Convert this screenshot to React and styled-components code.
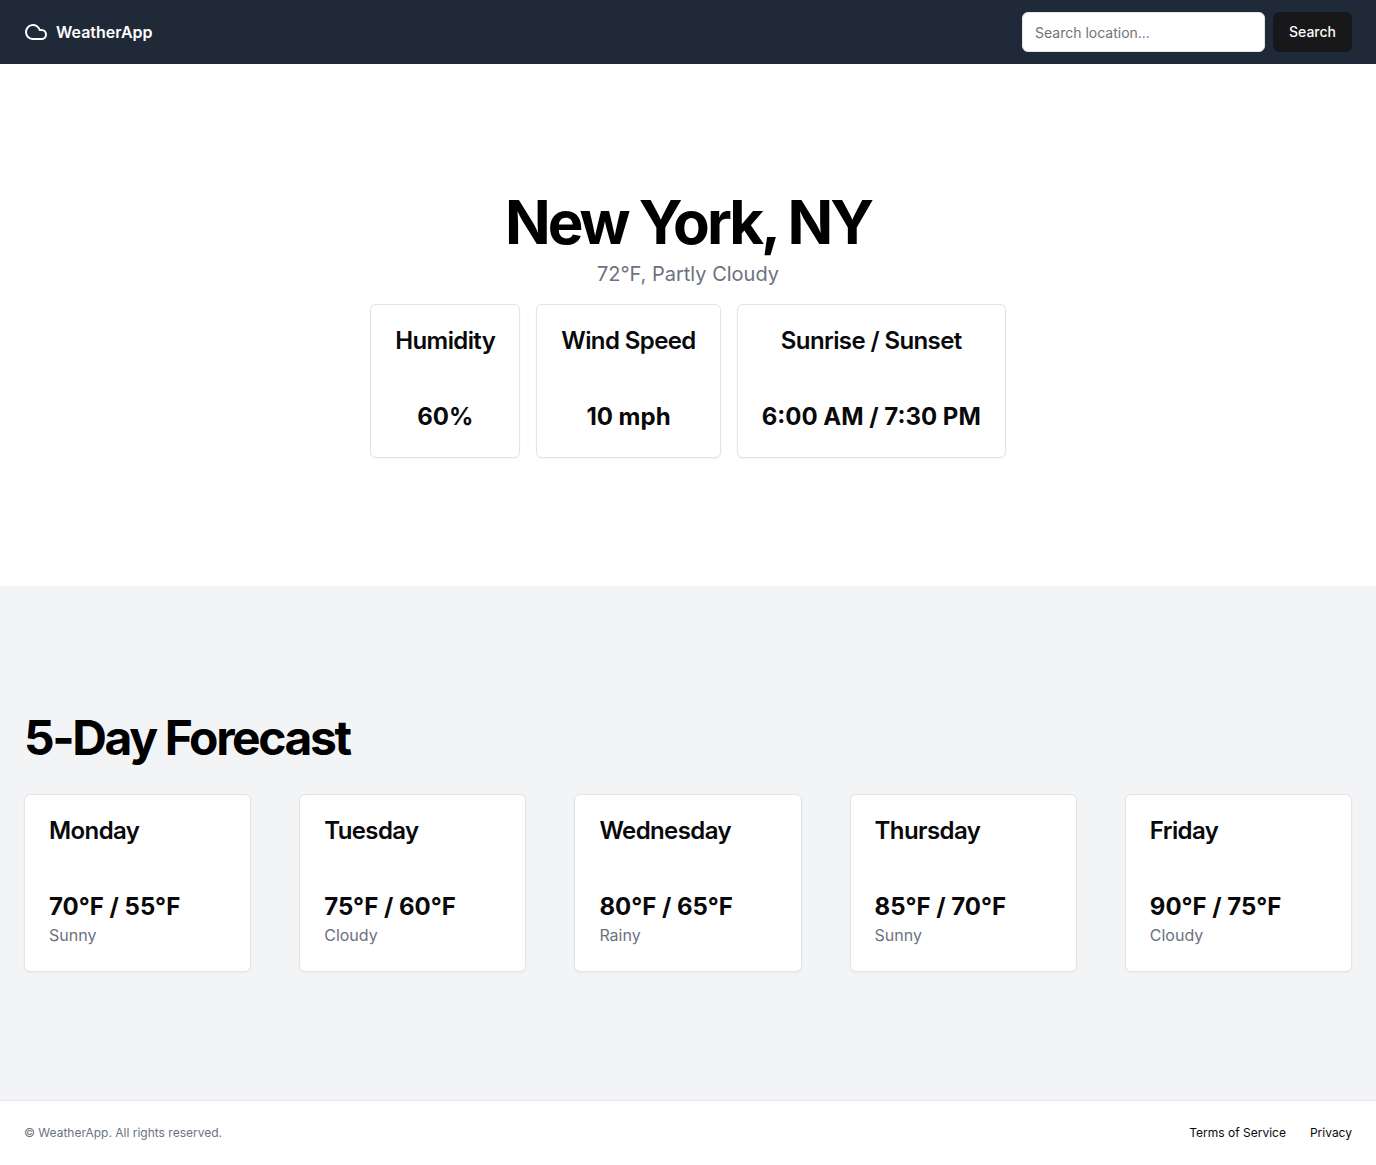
import React from "react";
import styled, { createGlobalStyle } from "styled-components";
import { Cloud } from "lucide-react";

const GlobalStyle = createGlobalStyle`
  *, *::before, *::after { box-sizing: border-box; }
  body {
    margin: 0;
    background: #fff;
    color: #09090b;
    font-family: Inter, "Liberation Sans", sans-serif;
    font-size: 16px;
    line-height: 24px;
    font-optical-sizing: none;
  }
  h1, h2, h3, p { margin: 0; }
`;

const Page = styled.div`
  display: flex;
  flex-direction: column;
  min-height: 100vh;
`;

const Header = styled.header`
  display: flex;
  align-items: center;
  justify-content: space-between;
  height: 64px;
  padding: 0 24px;
  background: #1f2937;
  color: #fff;
`;

const Brand = styled.a`
  display: flex;
  align-items: center;
  gap: 8px;
  color: inherit;
  font-weight: 600;
  text-decoration: none;
`;

const SearchForm = styled.form`
  display: flex;
  gap: 8px;
`;

const SearchInput = styled.input`
  width: 243px;
  height: 40px;
  padding: 8px 12px;
  border: 1px solid #e4e4e7;
  border-radius: 6px;
  background: #fff;
  color: #09090b;
  font: 400 14px/20px Inter, "Liberation Sans", sans-serif;

  &::placeholder {
    color: #71717a;
    opacity: 1;
  }
`;

const SearchButton = styled.button`
  height: 40px;
  padding: 8px 16px;
  border: 0;
  border-radius: 6px;
  background: #18181b;
  color: #fafafa;
  font: 500 14px/20px Inter, "Liberation Sans", sans-serif;
  cursor: pointer;
`;

const Section = styled.section`
  padding: 128px 24px;
  background: ${({ $muted }) => ($muted ? "#f3f4f6" : "#fff")};
`;

const Current = styled.div`
  display: flex;
  flex-direction: column;
  align-items: center;
  gap: 16px;
  text-align: center;
`;

const City = styled.h1`
  color: #000;
  font-size: 60px;
  font-weight: 700;
  line-height: 60px;
  letter-spacing: -0.05em;
`;

const Summary = styled.p`
  margin-top: 8px;
  color: #6b7280;
  font-size: 20px;
  line-height: 28px;
`;

const StatRow = styled.div`
  display: flex;
  flex-wrap: wrap;
  justify-content: center;
  gap: 16px;
`;

const Heading = styled.h2`
  color: #000;
  font-size: 48px;
  font-weight: 700;
  line-height: 48px;
  letter-spacing: -0.05em;
`;

const ForecastGrid = styled.div`
  display: grid;
  grid-template-columns: repeat(5, minmax(0, 1fr));
  gap: 48px;
  margin-top: 32px;

  @media (max-width: 1100px) {
    grid-template-columns: repeat(auto-fit, minmax(210px, 1fr));
  }
`;

const Card = styled.article`
  padding: 24px;
  border: 1px solid #e4e4e7;
  border-radius: 6px;
  background: #fff;
  box-shadow: 0 1px 2px rgba(0, 0, 0, 0.05);
`;

const CardTitle = styled.h3`
  margin-bottom: 48px;
  font-size: 24px;
  font-weight: 600;
  line-height: 24px;
  letter-spacing: -0.025em;
`;

const CardValue = styled.p`
  color: #09090b;
  font-size: 24px;
  font-weight: 700;
  line-height: 32px;
`;

const CardNote = styled.p`
  color: #6b7280;
`;

const Footer = styled.footer`
  display: flex;
  align-items: center;
  justify-content: space-between;
  padding: 24px;
  border-top: 1px solid #e5e7eb;
  font-size: 12px;
  line-height: 16px;
`;

const Copyright = styled.p`
  color: #6b7280;
`;

const FooterNav = styled.nav`
  display: flex;
  gap: 24px;
`;

const FooterLink = styled.a`
  color: #09090b;
  text-decoration: none;

  &:hover {
    text-decoration: underline;
  }
`;

const stats = [
  { title: "Humidity", value: "60%" },
  { title: "Wind Speed", value: "10 mph" },
  { title: "Sunrise / Sunset", value: "6:00 AM / 7:30 PM" },
];

const forecast = [
  { day: "Monday", temps: "70°F / 55°F", sky: "Sunny" },
  { day: "Tuesday", temps: "75°F / 60°F", sky: "Cloudy" },
  { day: "Wednesday", temps: "80°F / 65°F", sky: "Rainy" },
  { day: "Thursday", temps: "85°F / 70°F", sky: "Sunny" },
  { day: "Friday", temps: "90°F / 75°F", sky: "Cloudy" },
];

export default function App() {
  return (
    <Page>
      <GlobalStyle />
      <Header>
        <Brand href="#">
          <Cloud size={24} aria-hidden="true" />
          WeatherApp
        </Brand>
        <SearchForm role="search" onSubmit={(event) => event.preventDefault()}>
          <SearchInput type="search" aria-label="Search location" placeholder="Search location..." />
          <SearchButton type="submit">Search</SearchButton>
        </SearchForm>
      </Header>
      <main>
        <Section>
          <Current>
            <div>
              <City>New York, NY</City>
              <Summary>72°F, Partly Cloudy</Summary>
            </div>
            <StatRow>
              {stats.map(({ title, value }) => (
                <Card key={title}>
                  <CardTitle>{title}</CardTitle>
                  <CardValue>{value}</CardValue>
                </Card>
              ))}
            </StatRow>
          </Current>
        </Section>
        <Section $muted>
          <Heading>5-Day Forecast</Heading>
          <ForecastGrid>
            {forecast.map(({ day, temps, sky }) => (
              <Card key={day}>
                <CardTitle>{day}</CardTitle>
                <CardValue>{temps}</CardValue>
                <CardNote>{sky}</CardNote>
              </Card>
            ))}
          </ForecastGrid>
        </Section>
      </main>
      <Footer>
        <Copyright>© WeatherApp. All rights reserved.</Copyright>
        <FooterNav aria-label="Legal">
          <FooterLink href="#">Terms of Service</FooterLink>
          <FooterLink href="#">Privacy</FooterLink>
        </FooterNav>
      </Footer>
    </Page>
  );
}
